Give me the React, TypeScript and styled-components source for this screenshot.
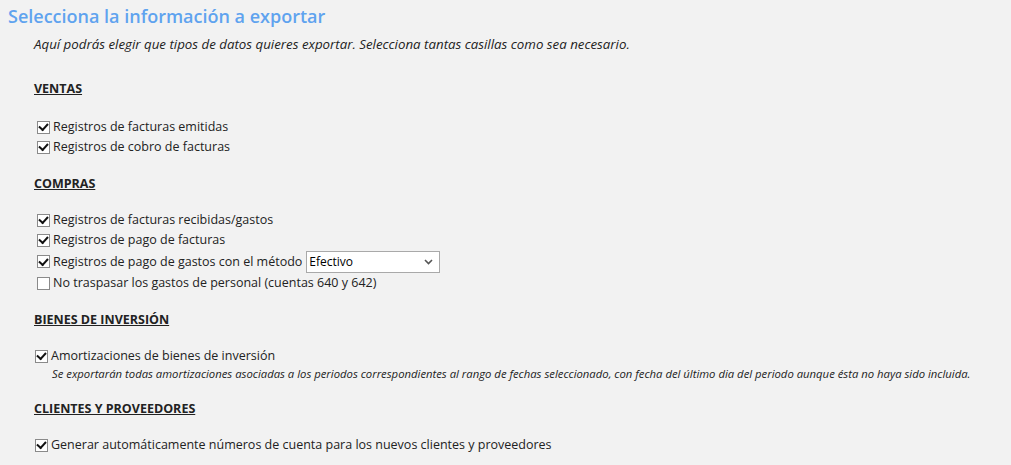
import { createGlobalStyle } from "styled-components";
import styled from "styled-components";

const GlobalStyle = createGlobalStyle`
  html, body {
    margin: 0;
    padding: 0;
    background: #f2f2f2;
  }
  body {
    font-family: "Open Sans", "Liberation Sans", sans-serif;
    font-size: 12.5px;
    color: #222;
  }
`;

const Page = styled.div`
  padding: 4px 8px 0 8px;
`;

const Title = styled.h1`
  margin: 0;
  font-size: 18px;
  line-height: 24px;
  font-weight: 600;
  color: #5fa3ef;
`;

const Intro = styled.p`
  margin: 6px 0 0 26px;
  font-style: italic;
  font-size: 13.3px;
  line-height: 20px;
`;

const Body = styled.div`
  padding-left: 26px;
`;

const SectionTitle = styled.h2<{ $first?: boolean }>`
  margin: ${({ $first }) => ($first ? "25px 0 18px" : "17px 0 16px")};
  font-size: 12.5px;
  line-height: 20px;
  font-weight: 700;
  text-decoration: underline;
  text-transform: uppercase;
`;

const Row = styled.label<{ $indent?: number; $tall?: boolean }>`
  display: flex;
  align-items: center;
  height: ${({ $tall }) => ($tall ? "23px" : "20px")};
  padding-left: ${({ $indent }) => $indent ?? 3}px;
  line-height: 20px;
  cursor: default;
`;

const Box = styled.input.attrs({ type: "checkbox" })`
  appearance: none;
  margin: 0 3px 0 0;
  width: 13px;
  height: 13px;
  border: 1px solid #8a8a8a;
  background: #fff;
  display: grid;
  place-items: center;
  flex-shrink: 0;

  &:checked::after {
    content: "";
    width: 7px;
    height: 4px;
    border-left: 2px solid #111;
    border-bottom: 2px solid #111;
    transform: translate(0, -1px) rotate(-48deg);
  }
`;

const Select = styled.select`
  margin-left: 4px;
  width: 134px;
  height: 22px;
  border: 1px solid #a9a9a9;
  background: #fff;
  font-family: "Open Sans", "Liberation Sans", sans-serif;
  font-size: 12px;
  color: #000;
  padding: 0 2px;
  appearance: none;
  background-image: url("data:image/svg+xml;utf8,<svg xmlns='http://www.w3.org/2000/svg' width='9' height='6'><path d='M1 1l3.5 3.5L8 1' fill='none' stroke='%23555' stroke-width='1.6'/></svg>");
  background-repeat: no-repeat;
  background-position: right 6px center;
`;

const Note = styled.div`
  padding-left: 18px;
  font-style: italic;
  font-size: 11.3px;
  line-height: 16px;
`;

type Item = { label: string; checked: boolean };

function Check({ label, checked, indent }: Item & { indent?: number }) {
  return (
    <Row $indent={indent}>
      <Box defaultChecked={checked} />
      {label}
    </Row>
  );
}

export default function App() {
  return (
    <>
      <GlobalStyle />
      <Page>
        <Title>Selecciona la información a exportar</Title>
        <Intro>
          Aquí podrás elegir que tipos de datos quieres exportar. Selecciona tantas casillas como sea necesario.
        </Intro>
        <Body>
          <SectionTitle $first>Ventas</SectionTitle>
          <Check label="Registros de facturas emitidas" checked />
          <Check label="Registros de cobro de facturas" checked />

          <SectionTitle>Compras</SectionTitle>
          <Check label="Registros de facturas recibidas/gastos" checked />
          <Check label="Registros de pago de facturas" checked />
          <Row $tall>
            <Box defaultChecked />
            Registros de pago de gastos con el método
            <Select defaultValue="efectivo">
              <option value="efectivo">Efectivo</option>
              <option value="banco">Banco</option>
            </Select>
          </Row>
          <Check label="No traspasar los gastos de personal (cuentas 640 y 642)" checked={false} />

          <SectionTitle>Bienes de inversión</SectionTitle>
          <Check label="Amortizaciones de bienes de inversión" checked indent={1} />
          <Note>
            Se exportarán todas amortizaciones asociadas a los periodos correspondientes al rango de fechas seleccionado,
            con fecha del último dia del periodo aunque ésta no haya sido incluida.
          </Note>

          <SectionTitle>Clientes y proveedores</SectionTitle>
          <Check label="Generar automáticamente números de cuenta para los nuevos clientes y proveedores" checked indent={1} />
        </Body>
      </Page>
    </>
  );
}
